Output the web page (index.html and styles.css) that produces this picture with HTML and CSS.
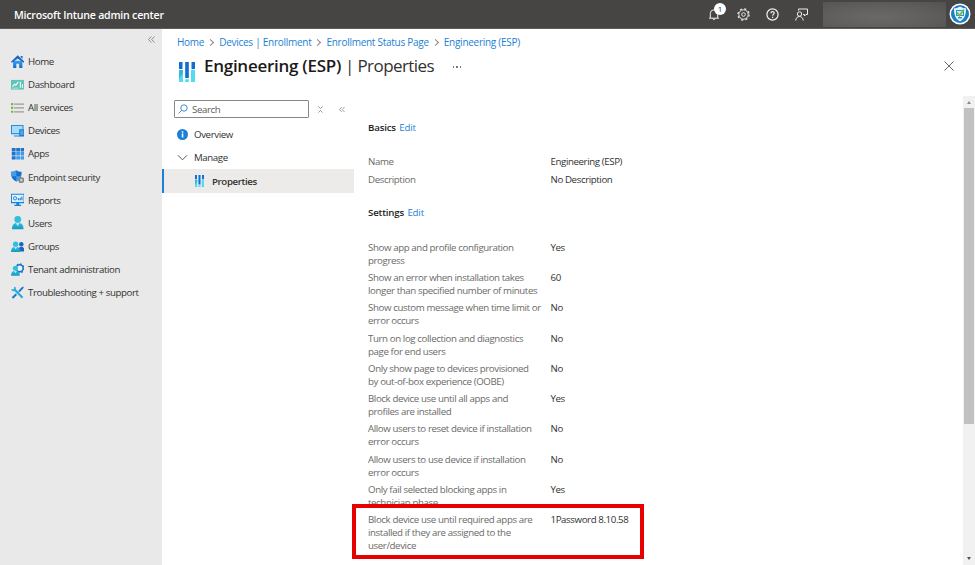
FILE: index.html
```html
<!DOCTYPE html>
<html lang="en">
<head>
<meta charset="utf-8">
<title>Engineering (ESP) | Properties</title>
<link rel="stylesheet" href="styles.css">
</head>
<body>
<svg width="0" height="0" class="defs">
  <defs>
    <linearGradient id="cy" x1="0" y1="0" x2="0" y2="1"><stop offset="0" stop-color="#32bfdc"/><stop offset="1" stop-color="#1797c4"/></linearGradient>
    <linearGradient id="bl" x1="0" y1="0" x2="0" y2="1"><stop offset="0" stop-color="#3f9df0"/><stop offset="1" stop-color="#0f6bd0"/></linearGradient>
    <symbol id="bars" viewBox="0 0 16 20" preserveAspectRatio="none">
      <path fill="#0f6fd0" d="M0 0h3.500v7H0zM6.200 0h3.600v16H6.200zM12.500 0H16v7h-3.500z"/>
      <path fill="#50dcf5" d="M0 8h4v12H0zM12 8h4v12h-4zM6.200 17.200h3.600V20H6.200z"/>
      <path fill="#38b6dc" d="M0 8h4v3L0 17z"/>
    </symbol>
    <symbol id="person" viewBox="0 0 14 14">
      <path fill="url(#cy)" d="M1 14c0-5 2-7 6-7s6 2 6 7z"/>
      <circle cx="7" cy="3.600" r="3.500" fill="#32bfdc"/>
      <path fill="#b7eef8" d="M5 7.200h4L7 10.500z"/>
    </symbol>
  </defs>
</svg>
<header class="topbar">
  <span class="brand">Microsoft Intune admin center</span>
  <div class="tools">
    <span class="bell">
      <svg width="12" height="13" viewBox="0 0 12 13" fill="none" stroke="#eee"><path d="M1 10.200h10M2.300 10V5.500a3.700 3.700 0 0 1 7.400 0V10M4.600 10.500a1.500 1.500 0 0 0 2.800 0"/></svg>
      <span class="badge">1</span>
    </span>
    <svg width="13" height="13" viewBox="0 0 13 13" fill="none" stroke="#e4e4e4"><circle cx="6.500" cy="6.500" r="4.700"/><circle cx="6.500" cy="6.500" r="5.600" stroke-width="1.200" stroke-dasharray="2.200 2.200"/><circle cx="6.500" cy="6.500" r="1.800"/></svg>
    <svg width="13" height="13" viewBox="0 0 13 13" fill="none" stroke="#f2f2f2"><circle cx="6.500" cy="6.500" r="5.600" stroke-width="1.200"/><path stroke-width="1.200" d="M4.900 5.300c0-2.200 3.300-2.200 3.300-.2 0 1.200-1.600 1.300-1.600 2.700M6.600 8.800V10"/></svg>
    <svg width="13" height="13" viewBox="0 0 13 13" fill="none" stroke="#eee"><path d="M3.500 2.500V1h9v5.500H11L9.500 8V6.500H8M.7 12.500c.2-5.300 7.300-5.300 7.500 0"/><circle cx="4.500" cy="6" r="2.200"/></svg>
  </div>
  <div class="account"></div>
  <svg class="avatar" width="22" height="22" viewBox="0 0 22 22"><circle cx="11" cy="11" r="10.500" fill="#fff"/><circle cx="11" cy="11" r="9" fill="#1780c8"/><path fill="#e8f4fb" d="M11 3.500c2 1.400 4 1.800 6 1.800 0 6-1 10.500-6 13.200-5-2.700-6-7.200-6-13.200 2 0 4-.4 6-1.800z"/><path fill="#2e91cf" d="M7 7h8v6H7zM9 14h4v1.500H9z"/><path fill="#cfe6f4" d="M8 8h6v4H8z"/><path fill="none" stroke="#74bd45" stroke-width="1.800" d="M8 9.500l2.500 3L15 6.500"/></svg>
</header>
<div class="shell">
  <nav class="side">
    <div class="collapse"><svg width="7" height="7" viewBox="0 0 7 7" fill="none" stroke="#777" stroke-width=".8"><path d="M3.300.5l-2.800 3 2.800 3M6.500.5l-2.800 3 2.800 3"/></svg></div>
    <a class="item"><svg viewBox="0 0 14 14"><path fill="url(#bl)" d="M2.200 6h9.600v7.500H8.500V9h-3v4.500H2.200z"/><path fill="#1767c1" d="M7 .3L14 7l-1 1-6-4.500L1 8 0 7zM10 1h2v3l-2-2z"/></svg>Home</a>
    <a class="item"><svg viewBox="0 0 14 14"><path fill="#62c3b8" d="M0 2h14v10H0z"/><path fill="none" stroke="#fff" stroke-width="1.100" d="M1.500 9l2.200-2.500L5 7.500 7.500 4M9.700 4v6M11.900 6.500V10"/><path fill="#b9e6e1" d="M1.500 10h6v1h-6z"/></svg>Dashboard</a>
    <a class="item"><svg viewBox="0 0 14 14"><path fill="#78b943" d="M0 2h2.300v2.300H0zM0 6h2.300v2.300H0zM0 10h2.300v2.300H0z"/><path fill="#9a9a9a" d="M3.200 2.600H14v1.200H3.200zM3.200 6.600H14v1.200H3.200zM3.200 10.600H14v1.200H3.200z"/></svg>All services</a>
    <a class="item"><svg viewBox="0 0 14 14"><path fill="#2186dc" d="M0 1h13v9.500H0zM3 12h6v1H3z"/><path fill="#a5dcfa" d="M1 2h11v7.500H1z"/><path fill="#1979d3" d="M8.500 5.500H14V13H8.500z"/><path fill="#4ba3eb" d="M9.500 6.500H13v5H9.500z"/></svg>Devices</a>
    <a class="item"><svg viewBox="0 0 14 14"><path fill="#1d73cd" d="M.8 1h4v3.600h-4zM5.400 1h4v3.600h-4zM10 1h3.700v3.600H10zM.8 5.300h4v3.600h-4zM.8 9.600h4V13h-4z"/><path fill="#4199e8" d="M5.400 5.300h4v3.600h-4zM10 5.300h3.700v3.600H10zM5.400 9.600h4V13h-4zM10 9.600h3.700V13H10z"/></svg>Apps</a>
    <a class="item"><svg viewBox="0 0 14 14"><path fill="#1670ce" d="M5.500.2C7.200 1.500 9 1.700 11 1.700c0 5-1 8-5.500 10.300C1 9.700 0 6.700 0 1.700c2 0 3.800-.2 5.500-1.500z"/><path fill="#489de9" d="M5.500.2V6.500H.7C.2 5 0 3.500 0 1.700c2 0 3.800-.2 5.500-1.500zM5.500 6.500h4.800c-.7 2.400-2 4-4.800 5.500z"/><circle cx="10.700" cy="10.500" r="2.300" fill="#ccc" stroke="#858585" stroke-width="1.600"/></svg>Endpoint security</a>
    <a class="item"><svg viewBox="0 0 14 14"><path fill="#1683d8" d="M0 .8h14v9.700H0zM5.500 10h3v2.500h-3zM3.500 12.300h7v1.200h-7z"/><path fill="#e1f4fd" d="M1 1.800h12v7.500H1z"/><circle cx="4.200" cy="5.500" r="1.700" fill="none" stroke="#1683d8"/><path stroke="#1683d8" stroke-width="1.200" d="M7.700 7.500V5.500M9.500 7.500V4.800M11.300 7.500V3.500"/></svg>Reports</a>
    <a class="item"><svg viewBox="0 0 14 14"><use href="#person"/></svg>Users</a>
    <a class="item"><svg viewBox="0 0 14 14"><circle cx="10.700" cy="4.500" r="2.300" fill="#1767c1"/><path fill="#1767c1" d="M7.500 12c0-3.500 1-5 3.200-5S14 8.500 14 12z"/><use href="#person" x="-.7" y="1" width="11" height="12"/></svg>Groups</a>
    <a class="item"><svg viewBox="0 0 14 14"><circle cx="9" cy="5.500" r="3.600" fill="#edf6fc" stroke="#1873cf" stroke-width="1.600"/><circle cx="9" cy="5.500" r="4.600" fill="none" stroke="#1873cf" stroke-width="1.200" stroke-dasharray="1.800 1.800"/><use href="#person" x="-.7" y="2.500" width="10.500" height="11"/></svg>Tenant administration</a>
    <a class="item"><svg viewBox="0 0 14 14" fill="none"><path stroke="#1873cf" stroke-width="2" d="M12.300 1.500L8.500 5.500M5.500 8.500l-4 4"/><path stroke="#1873cf" stroke-width="1" d="M13.500.5l-7 7"/><path stroke="#2aaed8" stroke-width="2.300" d="M3 3l9 9.200"/><path stroke="#2aaed8" stroke-width="1.800" d="M.8 3.500c1.500 2.300 4.200.7 3-2.500"/></svg>Troubleshooting + support</a>
  </nav>
  <main class="main">
    <div class="crumbs">
      <a>Home</a><i></i><a>Devices | Enrollment</a><i></i><a>Enrollment Status Page</a><i></i><a>Engineering (ESP)</a>
    </div>
    <div class="title">
      <svg class="logo" width="16" height="20"><use href="#bars"/></svg>
      <h1><b>Engineering (ESP)</b> <span>| Properties</span></h1>
      <span class="more"><i></i><i></i><i></i></span>
      <svg class="close" width="10" height="10" viewBox="0 0 10 10" stroke="#666" stroke-width="1"><path d="M.5.5l9 9M9.500.5l-9 9"/></svg>
    </div>
    <div class="body">
      <aside class="menu">
        <div class="searchrow">
          <div class="search"><svg width="10" height="10" viewBox="0 0 10 10" fill="none" stroke="#3b8fd8"><circle cx="6" cy="4" r="3.200"/><path d="M3.700 6.300L.5 9.500"/></svg>Search</div>
          <svg width="5" height="7" viewBox="0 0 5 7" fill="none" stroke="#777" stroke-width=".8"><path d="M.3.4l2.200 2.200L4.700.4M.3 6.600l2.200-2.200 2.200 2.200"/></svg>
          <svg class="fold" width="6" height="7" viewBox="0 0 7 7" fill="none" stroke="#777" stroke-width=".8"><path d="M3.300.5l-2.800 3 2.800 3M6.500.5l-2.800 3 2.800 3"/></svg>
        </div>
        <a class="entry"><svg width="11" height="11" viewBox="0 0 11 11"><circle cx="5.500" cy="5.500" r="5.500" fill="#1b7fd5"/><path fill="#fff" d="M4.800 4.500h1.500v4H4.800zM4.800 2.200h1.500v1.500H4.800z"/></svg>Overview</a>
        <a class="entry"><svg width="11" height="11" viewBox="0 0 11 11" fill="none" stroke="#555"><path d="M1 3.300l4.500 4.500L10 3.300"/></svg>Manage</a>
        <a class="entry active"><svg width="9" height="12"><use href="#bars"/></svg>Properties</a>
      </aside>
      <section class="detail">
        <h2>Basics <a>Edit</a></h2>
        <dl class="basics">
          <dt>Name</dt><dd>Engineering (ESP)</dd>
          <dt>Description</dt><dd>No Description</dd>
        </dl>
        <h2>Settings <a>Edit</a></h2>
        <dl class="settings">
          <dt>Show app and profile configuration<br>progress</dt><dd>Yes</dd>
          <dt>Show an error when installation takes<br>longer than specified number of minutes</dt><dd>60</dd>
          <dt>Show custom message when time limit or<br>error occurs</dt><dd>No</dd>
          <dt>Turn on log collection and diagnostics<br>page for end users</dt><dd>No</dd>
          <dt>Only show page to devices provisioned<br>by out-of-box experience (OOBE)</dt><dd>No</dd>
          <dt>Block device use until all apps and<br>profiles are installed</dt><dd>Yes</dd>
          <dt>Allow users to reset device if installation<br>error occurs</dt><dd>No</dd>
          <dt>Allow users to use device if installation<br>error occurs</dt><dd>No</dd>
          <dt>Only fail selected blocking apps in<br>technician phase</dt><dd>Yes</dd>
        </dl>
        <dl class="highlight">
          <dt>Block device use until required apps are<br>installed if they are assigned to the<br>user/device</dt><dd>1Password 8.10.58</dd>
        </dl>
      </section>
      <div class="scroll"><i class="up"></i><div class="thumb"></div><i class="down"></i></div>
    </div>
  </main>
</div>
</body>
</html>
```
FILE: styles.css
```css
* { box-sizing: border-box; }
body {
  margin: 0;
  width: 975px;
  height: 565px;
  overflow: hidden;
  background: #fff;
  color: #323130;
  font: 9.7px/13px "Open Sans", "Noto Sans", sans-serif;
  letter-spacing: -0.39px;
}
svg { display: block; flex: none; }
.defs { position: absolute; }
h1, h2, dl, dd { margin: 0; }

.topbar {
  height: 29px;
  display: flex;
  align-items: center;
  padding: 0 4px 0 14px;
  background: #464543;
  border-bottom: 1px solid #5d5c5b;
  color: #fff;
}
.brand { font-size: 10.6px; font-weight: 600; padding-top: 2px; letter-spacing: -0.22px; }
.tools { display: flex; align-items: center; gap: 16px; margin-left: auto; padding-top: 1px; }
.bell { position: relative; margin-right: 1px; }
.badge {
  position: absolute;
  left: 6px;
  top: -5px;
  width: 12px;
  height: 12px;
  border-radius: 50%;
  background: #fff;
  color: #333;
  font-size: 8px;
  line-height: 12px;
  letter-spacing: 0;
  text-align: center;
}
.account {
  width: 123px;
  height: 25px;
  margin: 1px 3px 0 15px;
  background: radial-gradient(ellipse at 45% 60%, #696968, #5e5d5c 60%, #535251);
}

.shell { display: flex; height: 536px; }
.side { width: 162px; background: #e9e9e9; flex: none; }
.collapse { display: flex; justify-content: flex-end; padding: 7px 7px 0 0; height: 21px; }
.item { display: flex; align-items: center; gap: 4px; height: 23.1px; padding-left: 10.500px; }
.item svg { width: 13.500px; height: 13.500px; }

.main { flex: 1; display: flex; flex-direction: column; min-width: 0; }
.crumbs {
  display: flex;
  align-items: center;
  height: 26px;
  padding-left: 15px;
  color: #1b7fd5;
  font-size: 10px;
  letter-spacing: -0.27px;
}
.crumbs i {
  width: 5px;
  height: 5px;
  margin: 1px 6px 0 4px;
  border: solid #888;
  border-width: 1px 1px 0 0;
  transform: rotate(45deg);
}
.title { display: flex; height: 41px; padding-left: 17px; }
.logo { margin-top: 7px; }
h1 { margin-left: 9px; font-size: 17px; line-height: 22px; font-weight: 400; white-space: nowrap; letter-spacing: -0.58px; }
h1 b { font-weight: 600; color: #1b1a19; letter-spacing: -0.27px; }
.more { display: flex; gap: 2px; margin: 11px 0 0 19px; }
.more i { width: 1.500px; height: 1.500px; background: #777; }
.close { margin: 6px 21px 0 auto; }

.body { display: flex; flex: 1; min-height: 0; }
.menu { width: 191.500px; flex: none; }
.searchrow { display: flex; align-items: center; margin: 4px 0 5px 12px; }
.search {
  display: flex;
  align-items: center;
  gap: 4px;
  width: 135px;
  height: 18px;
  margin-right: 9px;
  padding-left: 3px;
  border: 1px solid #8a8886;
  border-radius: 1px;
  color: #605e5c;
}
.fold { margin-left: 16px; }
.entry { display: flex; align-items: center; gap: 6px; height: 23px; padding-left: 15px; }
.entry.active {
  height: 24px;
  padding-left: 31px;
  gap: 8px;
  background: #edebe9;
  border-left: 2px solid #1b7fd5;
  font-weight: 600;
}

.detail { flex: 1; min-width: 0; padding: 25.200px 0 0 14.500px; }
h2 { font-size: 9.7px; line-height: 13px; font-weight: 600; color: #201f1e; letter-spacing: -0.18px; }
h2 a { font-weight: 400; color: #1b7fd5; margin-left: 1px; }
dl { display: grid; grid-template-columns: 182.500px 1fr; }
dt { color: #6b6a68; white-space: nowrap; }
.basics { grid-auto-rows: 17.500px; margin: 20.900px 0 16.300px; }
.settings { grid-auto-rows: 30.300px; margin-top: 21.300px; }
.highlight {
  width: 292px;
  height: 55px;
  margin: -9.500px 0 0 -16px;
  padding: 5.300px 0 0 12px;
  border: 4px solid #e60000;
  position: relative;
}
.scroll {
  width: 12px;
  display: flex;
  flex-direction: column;
  align-items: center;
  background: #f1f1f1;
}
.scroll i { border: solid transparent; border-width: 0 2.500px; }
.up { margin: 5px 0 4px; border-bottom: 3px solid #8a8a8a !important; }
.thumb { width: 10px; height: 316px; background: #c1c1c1; }
.down { margin: auto 0 5px; border-top: 3px solid #505050 !important; }
```
